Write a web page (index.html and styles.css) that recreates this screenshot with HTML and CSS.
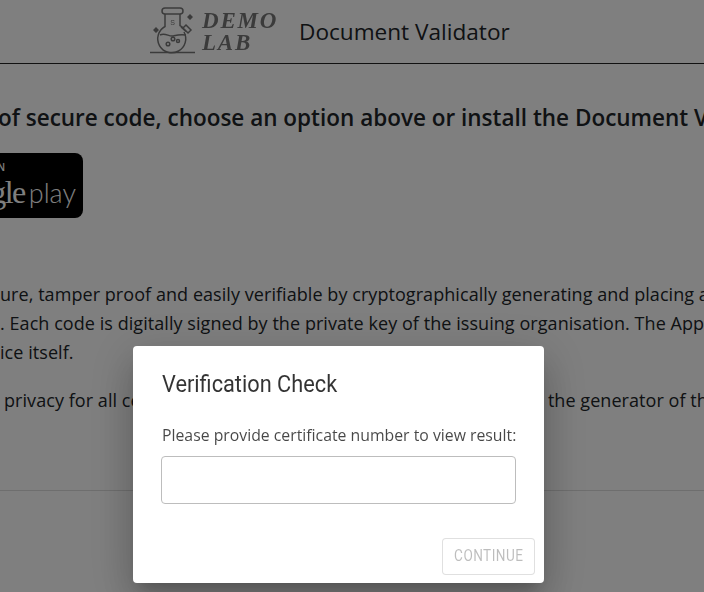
FILE: index.html
```html
<!doctype html>
<html lang="en">
<head>
	<meta charset="UTF-8">
	<title>Document Validator</title>
	<link rel="stylesheet" href="styles.css">
</head>
<body>
	<div class="page">
		<header class="topbar">
			<div class="logo">
				<svg class="flask" width="46" height="50" viewBox="0 0 46 50" fill="none" stroke="#777" stroke-width="1.5">
					<rect x="12" y="1" width="21" height="6" rx="3"/>
					<path d="M15 7v12.500a14 14 0 1 0 19 5.500"/>
					<path d="M30 7v11.500l3 2"/>
					<path d="M31 20l5 4.500"/>
					<path d="M36 18l5 5-3 3-5-5z"/>
					<path d="M10 28c5-3 9 2 13 1s7-2 13-1"/>
					<circle cx="18" cy="37" r="1.800"/>
					<circle cx="23" cy="32" r="1.800"/>
					<circle cx="28" cy="34" r="1.500"/>
					<path d="M0 45.500h45"/>
					<path d="M40 7l3 3-3 3-3-3zM6 20l3 3-3 3-3-3z" fill="#777" stroke="none"/>
					<text class="flask-s" x="22.500" y="18">S</text>
				</svg>
				<div class="logo-text">DEMO<br>LAB</div>
			</div>
			<div class="app-title">Document Validator</div>
		</header>
		<main class="content">
			<h2 class="lead">of secure code, choose an option above or install the Document Validator app</h2>
			<a class="play-badge">
				<span class="get">GET IT ON</span>
				<span class="store"><i>Google</i> <b>play</b></span>
			</a>
			<div class="about">
				<p>ure, tamper proof and easily verifiable by cryptographically generating and placing a secure code on the document<br>. Each code is digitally signed by the private key of the issuing organisation. The App verifies the signature on the<br>ice itself.</p>
				<p>privacy for all certificate holders as no data is stored or exposed the generator of the code</p>
			</div>
			<hr class="rule">
		</main>
	</div>
	<div class="overlay">
		<div class="dialog">
			<h3 class="dialog-title"><span>Verification Check</span></h3>
			<label class="field-label" for="cert">Please provide certificate number to view result:</label>
			<input class="field" id="cert" type="text">
			<div class="actions">
				<button class="btn" disabled><span>CONTINUE</span></button>
			</div>
		</div>
	</div>
</body>
</html>
```

FILE: styles.css
```css
*{
	box-sizing: border-box;
}
html, body{
	margin: 0;
	height: 100%;
	overflow: hidden;
	background: #fff;
}
body{
	font-family: "Open Sans", "Noto Sans", sans-serif;
	color: #212529;
}
/*---------------------------- header ------------------------------*/
.topbar{
	height: 64px;
	border-bottom: 1px solid #222;
	display: flex;
	align-items: center;
	padding-left: 150px;
}
.logo{
	width: 149px;
	display: flex;
	align-items: center;
	gap: 6px;
	filter: blur(.3px);
}
.flask{
	flex: none;
}
.flask-s{
	font-family: "Liberation Sans", sans-serif;
	font-size: 7px;
	fill: #777;
	stroke: none;
	text-anchor: middle;
}
.logo-text{
	font-family: "Liberation Serif", serif;
	font-style: italic;
	font-weight: bold;
	font-size: 23px;
	line-height: 22px;
	letter-spacing: 1.8px;
	color: #777;
}
.app-title{
	font-size: 22.6px;
	color: #212529;
	white-space: nowrap;
}
/*---------------------------- page text ---------------------------*/
.content{
	white-space: nowrap;
}
.lead{
	margin: 38px 0 0 -2px;
	font-size: 22.5px;
	line-height: 32px;
	font-weight: 600;
}
.play-badge{
	display: block;
	width: 170px;
	height: 65px;
	margin: 19px 0 0 -87px;
	background: #000;
	border-radius: 8px;
	color: #fff;
	text-align: right;
	padding: 8px 7px 0 0;
	overflow: hidden;
}
.play-badge span{
	display: block;
}
.play-badge .get{
	font-size: 10px;
	line-height: 12px;
	font-weight: 600;
	padding-right: 71px;
}
.play-badge .store{
	font-family: "Liberation Serif", serif;
	font-size: 32px;
	line-height: 38px;
	word-spacing: -4px;
}
.play-badge i{
	font-style: normal;
	letter-spacing: -1.5px;
}
.play-badge b{
	font-family: "Lato", sans-serif;
	font-size: 27px;
	font-weight: 300;
}
.about{
	margin-top: 62px;
	font-size: 18px;
	line-height: 29px;
	letter-spacing: .06px;
}
.about p{
	margin: 0 0 19px;
}
.about p + p{
	padding-left: 4px;
}
.rule{
	margin: 75px 0 0;
	border: 0;
	border-top: 1px solid #ddd;
}
/*---------------------------- dialog ------------------------------*/
.overlay{
	position: fixed;
	inset: 0;
	background: rgba(0,0,0,.5);
}
.dialog{
	position: absolute;
	left: 133px;
	top: 346px;
	width: 411px;
	height: 237px;
	padding: 25px 28px 8px 29px;
	background: #fff;
	border-radius: 4px;
	box-shadow: 0 11px 15px -7px rgba(0,0,0,.2), 0 24px 38px 3px rgba(0,0,0,.14), 0 9px 46px 8px rgba(0,0,0,.12);
	display: flex;
	flex-direction: column;
}
.dialog-title{
	margin: 0 0 26px;
	font-family: Roboto, sans-serif;
	font-size: 23px;
	line-height: 28px;
	font-weight: 400;
	color: rgba(0,0,0,.8);
}
.dialog-title span{
	display: inline-block;
	transform: scaleX(.946);
	transform-origin: left;
}
.field-label{
	font-size: 15.8px;
	line-height: 20px;
	color: rgba(0,0,0,.72);
	white-space: nowrap;
}
.field{
	display: block;
	width: 355px;
	height: 48px;
	margin: 11px 0 0 -1px;
	border: 1px solid #bdbdbd;
	border-radius: 4px;
	background: #fff;
}
.actions{
	margin-top: auto;
	margin-right: -19px;
	display: flex;
	justify-content: flex-end;
}
.btn{
	width: 93px;
	height: 37px;
	padding: 0 0 2px;
	font-family: Roboto, sans-serif;
	font-size: 16px;
	letter-spacing: .5px;
	color: rgba(0,0,0,.26);
	background: #fff;
	border: 1px solid rgba(0,0,0,.12);
	border-radius: 4px;
}
.btn span{
	display: inline-block;
	transform: scaleX(.85);
}
```
